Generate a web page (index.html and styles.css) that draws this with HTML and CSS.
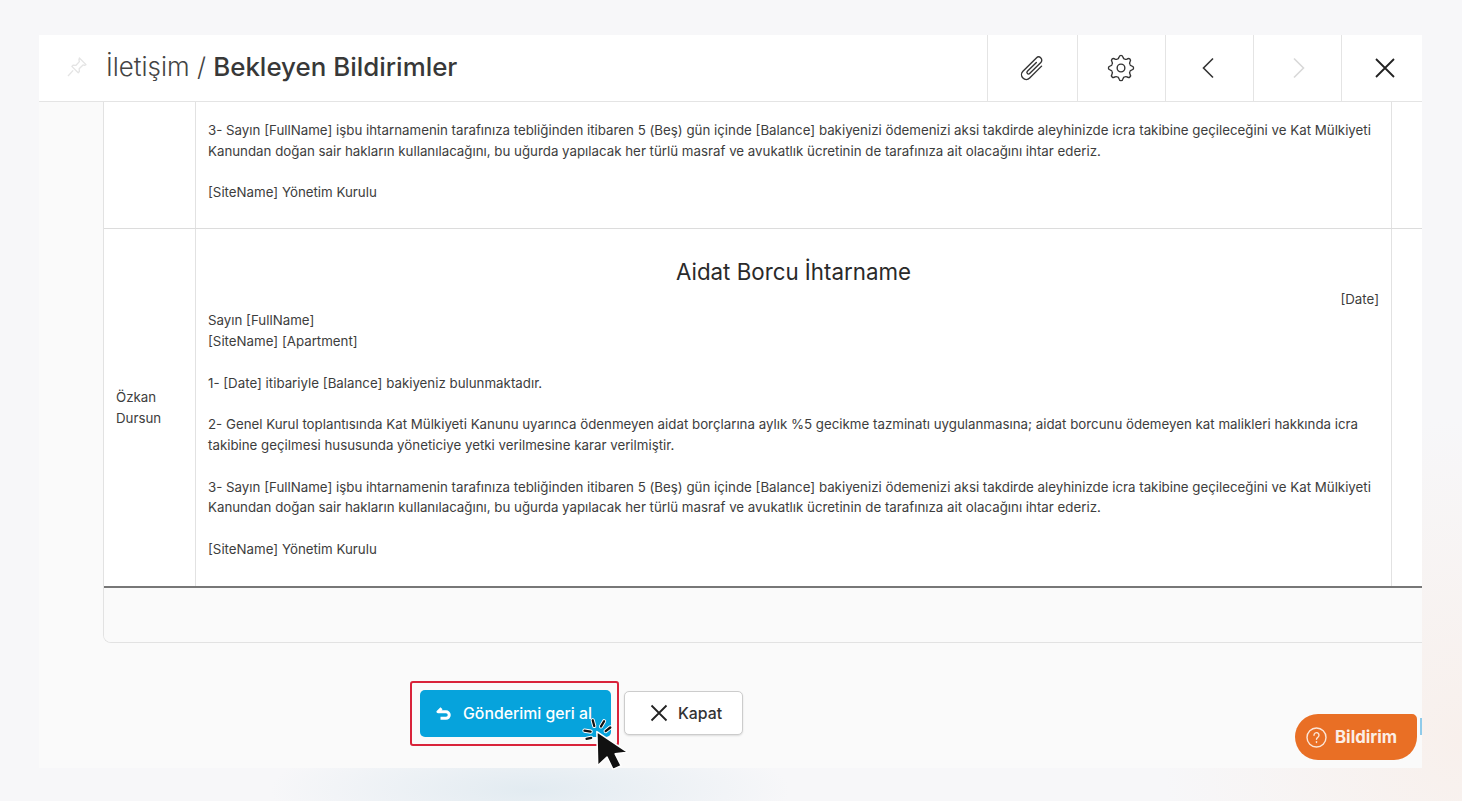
FILE: index.html
```html
<!DOCTYPE html>
<html lang="tr">
<head>
<meta charset="UTF-8">
<meta name="viewport" content="width=device-width, initial-scale=1.0">
<title>Bekleyen Bildirimler</title>
<link rel="stylesheet" href="styles.css">
</head>
<body>

<div class="window">
  <!-- Header -->
  <div class="window-header">
    <svg class="pin" width="24" height="24" viewBox="0 0 20 20" fill="none" stroke="#e4e4e4" stroke-width="1.1" stroke-linejoin="round"><path d="M12 2.500l5.500 5.500-1.200.6-1.300-.3-3.200 3.200.2 2.300-1 1-5.300-5.300 1-1 2.300.2L12 5.500l-.4-1.400z"/><path d="M6.800 12.800L2.500 17.500"/></svg>
    <h1 class="title">İletişim / <b>Bekleyen Bildirimler</b></h1>
    <div class="header-actions">
      <div class="action action-wide">
        <svg width="38" height="38" viewBox="-4 -4 36 36" fill="none" stroke="#333" stroke-width="1.300" stroke-linecap="round"><path transform="rotate(45 14 14)" d="M18.500 7V23a4.500 4.500 0 0 1-9 0V5a3 3 0 0 1 6 0V20a1.500 1.500 0 0 1-3 0V8"/></svg>
      </div>
      <div class="action action-gear">
        <svg width="28" height="28" viewBox="0 0 24 24" fill="none" stroke="#333" stroke-width="1.200">
          <defs><path id="gear-tooth" d="M8.824 4.332Q9.800 4.200 10.200 3Q10.500 1.200 12 1.200Q13.500 1.200 13.800 3Q14.200 4.200 15.176 4.332"/></defs>
          <use href="#gear-tooth"/>
          <use href="#gear-tooth" transform="rotate(45 12 12)"/>
          <use href="#gear-tooth" transform="rotate(90 12 12)"/>
          <use href="#gear-tooth" transform="rotate(135 12 12)"/>
          <use href="#gear-tooth" transform="rotate(180 12 12)"/>
          <use href="#gear-tooth" transform="rotate(225 12 12)"/>
          <use href="#gear-tooth" transform="rotate(270 12 12)"/>
          <use href="#gear-tooth" transform="rotate(315 12 12)"/>
          <circle cx="12" cy="12" r="3.300"/>
        </svg>
      </div>
      <div class="action">
        <svg width="24" height="24" viewBox="0 0 24 24" fill="none" stroke="#333" stroke-width="1.600"><path d="M15 2.500L5.500 12 15 21.500"/></svg>
      </div>
      <div class="action">
        <svg width="24" height="24" viewBox="0 0 24 24" fill="none" stroke="#d8d8d8" stroke-width="1.600"><path d="M8 2.500l9.500 9.500L8 21.500"/></svg>
      </div>
      <div class="action action-close">
        <svg width="26" height="26" viewBox="0 0 26 26" fill="none" stroke="#222" stroke-width="1.800"><path d="M4 4l18 18M22 4L4 22"/></svg>
      </div>
    </div>
  </div>

  <!-- Table -->
  <div class="content">
    <div class="table-box">
      <div class="row row-first">
        <div class="cell-name"></div>
        <div class="cell-body">
          <p>3- Sayın [FullName] işbu ihtarnamenin tarafınıza tebliğinden itibaren 5 (Beş) gün içinde [Balance] bakiyenizi ödemenizi aksi takdirde aleyhinizde icra takibine geçileceğini ve Kat Mülkiyeti<br>Kanundan doğan sair hakların kullanılacağını, bu uğurda yapılacak her türlü masraf ve avukatlık ücretinin de tarafınıza ait olacağını ihtar ederiz.</p>
          <p>[SiteName] Yönetim Kurulu</p>
        </div>
        <div class="cell-rest"></div>
      </div>
      <div class="row row-last">
        <div class="cell-name">Özkan<br>Dursun</div>
        <div class="cell-body">
          <h2 class="doc-title">Aidat Borcu İhtarname</h2>
          <div class="doc-date">[Date]</div>
          <p>Sayın [FullName]<br>[SiteName] [Apartment]</p>
          <p>1- [Date] itibariyle [Balance] bakiyeniz bulunmaktadır.</p>
          <p>2- Genel Kurul toplantısında Kat Mülkiyeti Kanunu uyarınca ödenmeyen aidat borçlarına aylık %5 gecikme tazminatı uygulanmasına; aidat borcunu ödemeyen kat malikleri hakkında icra<br>takibine geçilmesi hususunda yöneticiye yetki verilmesine karar verilmiştir.</p>
          <p>3- Sayın [FullName] işbu ihtarnamenin tarafınıza tebliğinden itibaren 5 (Beş) gün içinde [Balance] bakiyenizi ödemenizi aksi takdirde aleyhinizde icra takibine geçileceğini ve Kat Mülkiyeti<br>Kanundan doğan sair hakların kullanılacağını, bu uğurda yapılacak her türlü masraf ve avukatlık ücretinin de tarafınıza ait olacağını ihtar ederiz.</p>
          <p>[SiteName] Yönetim Kurulu</p>
        </div>
        <div class="cell-rest"></div>
      </div>
      <div class="table-footer"></div>
    </div>

    <!-- Buttons -->
    <div class="buttons">
      <div class="highlight">
        <button class="btn btn-primary">
          <svg width="15" height="14" viewBox="0 0 15 14" fill="none" stroke="#fff" stroke-width="3" stroke-linejoin="round"><path d="M5.500 1.300L2 4.800h8a3 3 0 0 1 0 6.500H4.500"/></svg>
          Gönderimi geri al
        </button>
      </div>
      <button class="btn btn-close">
        <svg width="20" height="20" viewBox="0 0 20 20" fill="none" stroke="#222" stroke-width="1.800"><path d="M2.500 2.500l15 15M17.500 2.500l-15 15"/></svg>
        Kapat
      </button>
    </div>
  </div>

  <!-- Floating notification button -->
  <div class="notify">
    <svg width="21" height="21" viewBox="0 0 21 21" fill="none" stroke="#fbe6d8" stroke-width="1.400"><circle cx="10.500" cy="10.500" r="9.500"/><path d="M8 8.200a2.500 2.500 0 1 1 3.800 2.100c-.9.600-1.300 1-1.300 2" stroke-linecap="round"/><path d="M10.500 14.600v1" stroke-linecap="round"/></svg>
    Bildirim
  </div>
  <div class="notify-edge"></div>
</div>

<!-- Click cursor -->
<svg class="cursor" width="54" height="60" viewBox="0 0 52 58" stroke-linecap="round">
  <g stroke="#fff" stroke-width="4">
    <path d="M18 7l1.500 5.500M29 8l-3 5M35 14l-4.500 3.500M10 17l6 1M12 25l4.500-1"/>
  </g>
  <g stroke="#111" stroke-width="2.200">
    <path d="M18 7l1.500 5.500M29 8l-3 5M35 14l-4.500 3.500M10 17l6 1M12 25l4.500-1"/>
  </g>
  <path d="M22 18l.8 33 9-8.500 5.700 12 8-3.500-5.800-11.500 12.300-1.500z" fill="#111" stroke="#fff" stroke-width="1.500" stroke-linejoin="round"/>
</svg>

</body>
</html>
```

FILE: styles.css
```css
/* Basic Reset */
* {
  box-sizing: border-box;
  margin: 0;
  padding: 0;
  font-family: 'Inter', sans-serif;
}

/* Background */
html, body {
  height: 100%;
  overflow: hidden;
}

body {
  position: relative;
  padding: 35px 40px 33px 39px;
  background:
    radial-gradient(ellipse 260px 60px at 530px 790px, #e2ebf1, rgba(226, 235, 241, 0)),
    radial-gradient(ellipse 300px 320px at 1462px 740px, #f8f0ec, rgba(248, 240, 236, 0)),
    #f7f7f9;
  color: #333;
}

/* Window */
.window {
  position: relative;
  height: 733px;
  background: #fafafa;
  overflow: hidden;
}

.window-header {
  display: flex;
  align-items: center;
  height: 67px;
  background: #fff;
  border-bottom: 1px solid #e4e4e4;
}

.pin {
  margin: -3px 0 0 26px;
}

.title {
  margin: -3px 0 0 17px;
  font-size: 25.9px;
  font-weight: 300;
  color: #444;
}

.title b {
  font-weight: 500;
  color: #383838;
}

.header-actions {
  display: flex;
  height: 100%;
  margin-left: auto;
}

.action {
  display: flex;
  justify-content: center;
  align-items: center;
  width: 88px;
  border-left: 1px solid #e4e4e4;
}

.action-wide {
  width: 90px;
}

.action-gear {
  padding-right: 2px;
}

.action-close {
  width: 81px;
  padding-left: 6px;
}

/* Table */
.content {
  padding-left: 64px;
}

.table-box {
  width: 1400px;
  border-left: 1px solid #e2e2e2;
  border-bottom: 1px solid #e2e2e2;
  border-bottom-left-radius: 8px;
}

.row {
  display: flex;
  background: #fff;
  font-size: 13.3px;
  line-height: 20.8px;
  color: #3d3d3d;
}

.row-first {
  height: 127px;
  border-bottom: 1px solid #dcdcdc;
}

.row-last {
  height: 359px;
  border-bottom: 2px solid #777;
}

.cell-name {
  display: flex;
  align-items: center;
  width: 91px;
  padding-left: 12px;
}

.cell-body {
  width: 1197px;
  padding: 18px 12px 0;
  border-left: 1px solid #e2e2e2;
  border-right: 1px solid #e2e2e2;
}

.cell-body p {
  margin-bottom: 20.8px;
}

.doc-title {
  padding: 10px 0 3.4px;
  font-size: 22.3px;
  line-height: 29px;
  font-weight: 400;
  text-align: center;
  color: #2a2a2a;
}

.doc-date {
  text-align: right;
}

.table-footer {
  height: 54px;
  background: #fafafa;
  border-bottom-left-radius: 7px;
}

/* Buttons */
.buttons {
  display: flex;
  align-items: flex-start;
  gap: 5px;
  margin-top: 38px;
  margin-left: 307px;
}

.highlight {
  height: 65px;
  padding: 7px 6px 7px 8px;
  border: 2px solid #d9233a;
  border-radius: 3px;
}

.btn {
  display: flex;
  justify-content: center;
  align-items: center;
  font-size: 15.8px;
  font-weight: 500;
  border-radius: 5px;
}

.btn-primary {
  gap: 12px;
  width: 191px;
  height: 47px;
  padding-right: 3px;
  color: #fff;
  background: #06a3dc;
  border: none;
}

.btn-close {
  gap: 9px;
  width: 119px;
  height: 44px;
  margin-top: 10px;
  padding-left: 4px;
  color: #333;
  background: #fff;
  border: 1px solid #ccc;
  box-shadow: 0 1px 2px rgba(0, 0, 0, 0.12);
}

/* Notification */
.notify {
  position: absolute;
  left: 1256px;
  top: 679px;
  display: flex;
  align-items: center;
  gap: 8px;
  width: 122px;
  height: 46px;
  padding-left: 11px;
  font-size: 16.8px;
  font-weight: 700;
  color: #fbeee6;
  background: #e96f25;
  border-radius: 23px 5px 23px 23px;
}

.notify-edge {
  position: absolute;
  left: 1381px;
  top: 683px;
  width: 2px;
  height: 17px;
  background: #8fcbea;
}

.cursor {
  position: absolute;
  left: 574px;
  top: 713px;
}
```
